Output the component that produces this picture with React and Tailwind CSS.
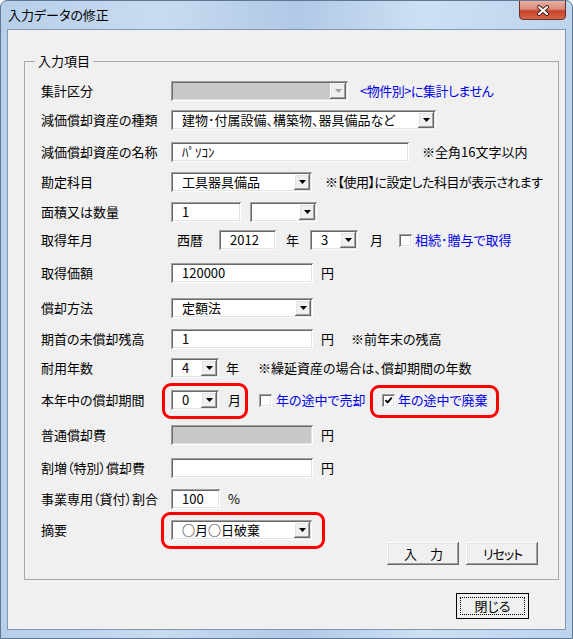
import React from 'react';

const sunken =
  'shadow-[inset_1px_1px_0_#a0a0a0,inset_-1px_-1px_0_#ffffff,inset_2px_2px_0_#696969,inset_-2px_-2px_0_#e3e3e3]';
const raised =
  'shadow-[inset_-1px_-1px_0_#696969,inset_1px_1px_0_#ffffff,inset_-2px_-2px_0_#a0a0a0,inset_2px_2px_0_#e3e3e3]';

function Arrow({ disabled }) {
  return (
    <svg width="7" height="4" viewBox="0 0 7 4">
      <path d="M0 0h7L3.5 4z" fill={disabled ? '#a0a0a0' : '#000'} />
    </svg>
  );
}

function TextBox({ w, value, disabled }) {
  return (
    <div
      className={`h-[20px] ${w} ${disabled ? 'bg-[#c8c8c8]' : 'bg-white'} ${sunken} flex items-center pl-[11px] shrink-0`}
    >
      {value}
    </div>
  );
}

function Combo({ w, value, disabled }) {
  return (
    <div
      className={`h-[20px] ${w} ${disabled ? 'bg-[#c8c8c8]' : 'bg-white'} ${sunken} flex items-center pl-[11px] shrink-0`}
    >
      <span className="whitespace-nowrap">{value}</span>
      <div
        className={`ml-auto mr-[2px] w-[16px] h-[16px] bg-[#f0f0f0] ${raised} flex items-center justify-center`}
      >
        <Arrow disabled={disabled} />
      </div>
    </div>
  );
}

function Check({ checked }) {
  return (
    <div className={`w-[13px] h-[13px] bg-white ${sunken} flex items-center justify-center shrink-0`}>
      {checked && (
        <svg width="9" height="9" viewBox="0 0 9 9">
          <path d="M1.5 4.2 3.6 6.4 7.8 1.6" fill="none" stroke="#000" strokeWidth="1.8" />
        </svg>
      )}
    </div>
  );
}

function Row({ label, mt, children }) {
  return (
    <div className={`relative flex items-center h-[20px] ${mt}`}>
      <div className="w-[130px] shrink-0 whitespace-nowrap">{label}</div>
      {children}
    </div>
  );
}

function Button({ children }) {
  return (
    <div
      className={`w-[72px] h-[23px] bg-[#f0f0f0] ${raised} flex items-center justify-center whitespace-nowrap`}
    >
      {children}
    </div>
  );
}

export default function App() {
  return (
    <div className="w-[573px] h-[639px] rounded-t-[7px] border border-[#5e7794] bg-[linear-gradient(90deg,#b7cfe9_0%,#c8dbf0_28%,#b0c9e5_52%,#cde0f4_74%,#bdd4ed_100%)] text-[13px] text-black font-['Noto_Sans_CJK_JP',sans-serif] [font-feature-settings:'palt'] overflow-hidden">
      <div className="h-[28px] flex items-start">
        <div className="pl-[7px] pt-[5px] text-[13px] leading-[17px] whitespace-nowrap">入力データの修正</div>
        <div className="ml-auto mr-[6px] -mt-px w-[47px] h-[20px] rounded-b-[4px] border border-[#6b3128] bg-[linear-gradient(180deg,#eab0a3_0%,#d98a7b_45%,#c4432d_55%,#d76548_100%)] flex items-center justify-center">
          <svg width="14" height="11" viewBox="0 0 14 11">
            <path d="M3 2l8 7M11 2l-8 7" stroke="#4b2420" strokeWidth="4" strokeLinecap="round" />
            <path d="M3 2l8 7M11 2l-8 7" stroke="#ffffff" strokeWidth="2" strokeLinecap="round" />
          </svg>
        </div>
      </div>

      <div className="mx-[6px] h-[601px] border border-[#8197b3] bg-[#f0f0f0] flex flex-col">
        <fieldset className="ml-[16px] mt-[21px] w-[527px] border border-[#a8a8a8] px-[16px] pb-[14px]">
          <legend className="-ml-[6px] px-[3px] h-[20px] leading-[20px]">入力項目</legend>

          <Row label="集計区分" mt="mt-[10px]">
            <Combo w="w-[177px]" disabled />
            <span className="ml-[12px] text-[#0000e8] whitespace-nowrap tracking-[-0.5px]">&lt;物件別&gt;に集計しません</span>
          </Row>

          <Row label="減価償却資産の種類" mt="mt-[9px]">
            <Combo w="w-[265px]" value="建物･付属設備、構築物、器具備品など" />
          </Row>

          <Row label="減価償却資産の名称" mt="mt-[12px]">
            <TextBox w="w-[238px]" value="ﾊﾟｿｺﾝ" />
            <span className="ml-[13px] whitespace-nowrap">※全角16文字以内</span>
          </Row>

          <Row label="勘定科目" mt="mt-[10px]">
            <Combo w="w-[141px]" value="工具器具備品" />
            <span className="ml-[13px] whitespace-nowrap tracking-[-0.5px]">※【使用】に設定した科目が表示されます</span>
          </Row>

          <Row label="面積又は数量" mt="mt-[10px]">
            <TextBox w="w-[70px]" value="1" />
            <div className="ml-[9px]">
              <Combo w="w-[67px]" />
            </div>
          </Row>

          <Row label="取得年月" mt="mt-[8px]">
            <span className="ml-[6px] w-[42px] shrink-0">西暦</span>
            <TextBox w="w-[57px]" value="2012" />
            <span className="ml-[10px] w-[24px] shrink-0">年</span>
            <Combo w="w-[48px]" value="3" />
            <span className="ml-[12px] w-[29px] shrink-0">月</span>
            <Check />
            <span className="ml-[3px] text-[#0000e8] whitespace-nowrap">相続･贈与で取得</span>
          </Row>

          <Row label="取得価額" mt="mt-[13px]">
            <TextBox w="w-[142px]" value="120000" />
            <span className="ml-[8px]">円</span>
          </Row>

          <Row label="償却方法" mt="mt-[15px]">
            <Combo w="w-[142px]" value="定額法" />
          </Row>

          <Row label="期首の未償却残高" mt="mt-[11px]">
            <TextBox w="w-[142px]" value="1" />
            <span className="ml-[8px] w-[30px] shrink-0">円</span>
            <span className="whitespace-nowrap">※前年末の残高</span>
          </Row>

          <Row label="耐用年数" mt="mt-[9px]">
            <Combo w="w-[48px]" value="4" />
            <span className="ml-[7px] w-[32px] shrink-0">年</span>
            <span className="whitespace-nowrap">※繰延資産の場合は、償却期間の年数</span>
          </Row>

          <Row label="本年中の償却期間" mt="mt-[12px]">
            <Combo w="w-[48px]" value="0" />
            <span className="ml-[9px] w-[31px] shrink-0">月</span>
            <Check />
            <span className="ml-[4px] w-[106px] shrink-0 text-[#0000e8] whitespace-nowrap">年の途中で売却</span>
            <Check checked />
            <span className="ml-[3px] text-[#0000e8] whitespace-nowrap">年の途中で廃棄</span>
            <div className="absolute left-[121px] -top-[7px] w-[86px] h-[36px] rounded-[9px] border-[3px] border-[#ff0000]" />
            <div className="absolute left-[329px] -top-[5px] w-[129px] h-[33px] rounded-[9px] border-[3px] border-[#ff0000]" />
          </Row>

          <Row label="普通償却費" mt="mt-[15px]">
            <TextBox w="w-[142px]" disabled />
            <span className="ml-[8px]">円</span>
          </Row>

          <Row label="割増（特別）償却費" mt="mt-[13px]">
            <TextBox w="w-[142px]" />
            <span className="ml-[8px]">円</span>
          </Row>

          <Row label="事業専用（貸付）割合" mt="mt-[11px]">
            <TextBox w="w-[49px]" value="100" />
            <span className="ml-[8px]">%</span>
          </Row>

          <Row label="摘要" mt="mt-[11px]">
            <Combo w="w-[141px]" value="○月○日破棄" />
            <div className="absolute left-[120px] -top-[8px] w-[164px] h-[37px] rounded-[9px] border-[3px] border-[#ff0000]" />
          </Row>

          <div className="mt-[2px] flex justify-end gap-[7px] pr-[4px]">
            <Button>入　力</Button>
            <Button>
              <span className="tracking-[-1px]">リセット</span>
            </Button>
          </div>
        </fieldset>

        <div className="mt-[13px] flex justify-end pr-[36px]">
          <div className="w-[73px] h-[26px] border border-black bg-[#f0f0f0] p-[3px]">
            <div className="w-full h-full border border-dotted border-black flex items-center justify-center">
              閉じる
            </div>
          </div>
        </div>
      </div>
    </div>
  );
}
